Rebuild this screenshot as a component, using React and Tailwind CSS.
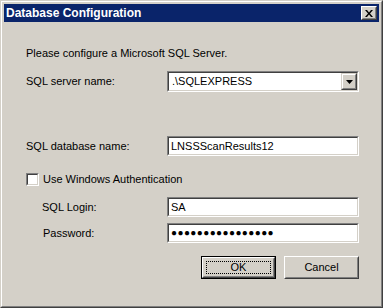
import React from "react";

// sunken 3d edge used by text boxes, combo and checkbox
const sunkenOuter = "border border-t-[#808080] border-l-[#808080] border-r-white border-b-white";
const sunkenInner = "border border-t-[#404040] border-l-[#404040] border-r-[#d4d0c8] border-b-[#d4d0c8]";

function TextBox({ value, password }) {
  return (
    <div className={`flex-1 h-[20px] ${sunkenOuter}`}>
      <div className={`h-full bg-white flex items-center pl-[2px] ${sunkenInner}`}>
        {password ? (
          <span className="text-[10px] tracking-[0.4px] leading-none">{value}</span>
        ) : (
          <span className="leading-none">{value}</span>
        )}
      </div>
    </div>
  );
}

function ComboBox({ value }) {
  return (
    <div className={`flex-1 h-[21px] ${sunkenOuter}`}>
      <div className={`h-full bg-white flex items-center ${sunkenInner}`}>
        <span className="flex-1 pl-[3px] leading-none">{value}</span>
        {/* dropdown arrow button */}
        <div className="w-[16px] h-full border border-t-[#d4d0c8] border-l-[#d4d0c8] border-r-[#404040] border-b-[#404040]">
          <div className="h-full bg-[#d4d0c8] border border-t-white border-l-white border-r-[#808080] border-b-[#808080] flex items-center justify-center">
            <svg width="7" height="4" viewBox="0 0 7 4">
              <path d="M0 0H7L3.5 4Z" fill="#000" />
            </svg>
          </div>
        </div>
      </div>
    </div>
  );
}

function Button({ label, isDefault }) {
  const face = (
    <div className="h-full border border-t-white border-l-white border-r-[#404040] border-b-[#404040]">
      <div className="h-full bg-[#d4d0c8] border border-t-[#d4d0c8] border-l-[#d4d0c8] border-r-[#808080] border-b-[#808080] flex items-center justify-center p-[2px]">
        {isDefault ? (
          <div className="w-full h-full border border-dotted border-black flex items-center justify-center">
            {label}
          </div>
        ) : (
          label
        )}
      </div>
    </div>
  );
  return (
    <div className={`w-[75px] h-[23px] ${isDefault ? "border border-black" : ""}`}>
      {face}
    </div>
  );
}

export default function App() {
  return (
    <div
      className="w-[383px] h-[308px] border border-t-[#d4d0c8] border-l-[#d4d0c8] border-r-[#404040] border-b-[#404040] text-[11px] text-black"
      style={{ fontFamily: '"Liberation Sans", Arial, sans-serif' }}
    >
      <div className="h-full bg-[#d4d0c8] border border-t-white border-l-white border-r-[#808080] border-b-[#808080] p-[2px] flex flex-col">
        {/* title bar */}
        <div className="h-[18px] bg-[#0a246a] flex items-center justify-between pl-[2px] pr-[2px]">
          <span className="text-white font-bold text-[12px] leading-none">Database Configuration</span>
          <div className="w-[16px] h-[14px] border border-t-white border-l-white border-r-[#404040] border-b-[#404040]">
            <div className="h-full bg-[#d4d0c8] border border-t-[#d4d0c8] border-l-[#d4d0c8] border-r-[#808080] border-b-[#808080] flex items-center justify-center">
              <svg width="8" height="7" viewBox="0 0 8 7">
                <path d="M0 0h2l2 2.5L6 0h2L5 3.5 8 7H6L4 4.5 2 7H0l3-3.5Z" fill="#000" />
              </svg>
            </div>
          </div>
        </div>

        {/* dialog body */}
        <div className="flex-1 flex flex-col pl-[22px] pr-[20px]">
          <div className="mt-[25px] h-[13px] leading-[13px]">Please configure a Microsoft SQL Server.</div>

          <div className="mt-[11px] flex items-center">
            <span className="w-[141px]">SQL server name:</span>
            <ComboBox value=".\SQLEXPRESS" />
          </div>

          <div className="mt-[44px] flex items-center">
            <span className="w-[141px]">SQL database name:</span>
            <TextBox value="LNSSScanResults12" />
          </div>

          <div className="mt-[17px] flex items-center h-[13px]">
            <div className={`w-[13px] h-[13px] ${sunkenOuter}`}>
              <div className={`h-full bg-white ${sunkenInner}`} />
            </div>
            <span className="ml-[4px]">Use Windows Authentication</span>
          </div>

          <div className="mt-[11px] flex items-center">
            <span className="w-[141px] pl-[16px]">SQL Login:</span>
            <TextBox value="SA" />
          </div>

          <div className="mt-[6px] flex items-center">
            <span className="w-[141px] pl-[17px]">Password:</span>
            <TextBox value="●●●●●●●●●●●●●●●●" password />
          </div>

          <div className="mt-[13px] flex justify-end gap-[8px]">
            <Button label="OK" isDefault />
            <Button label="Cancel" />
          </div>
        </div>
      </div>
    </div>
  );
}
